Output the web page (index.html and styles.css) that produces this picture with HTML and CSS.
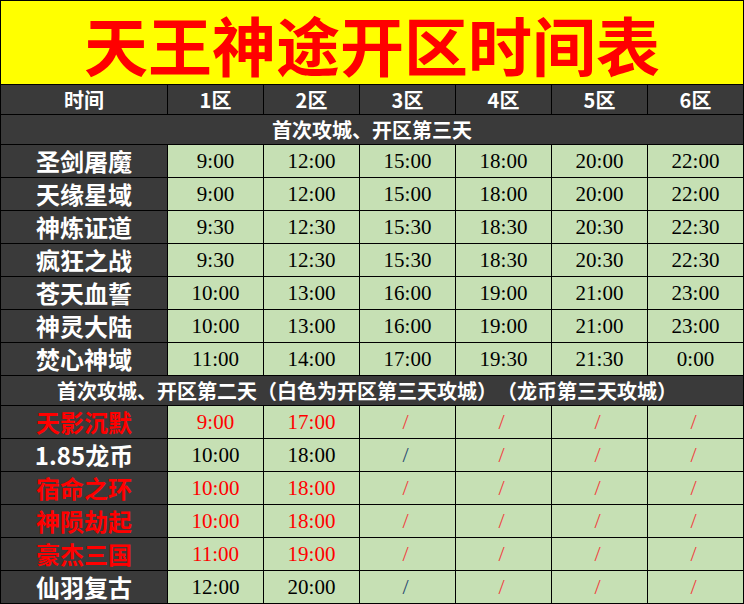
FILE: index.html
```html
<!DOCTYPE html>
<html lang="zh-CN">
<head>
<meta charset="utf-8">
<title>天王神途开区时间表</title>
<link rel="stylesheet" href="styles.css">
</head>
<body>
<div class="sheet">
  <div class="title">天王神途开区时间表</div>
  <div class="grid">
    <div class="hd">时间</div>
    <div class="hd">1区</div>
    <div class="hd">2区</div>
    <div class="hd">3区</div>
    <div class="hd">4区</div>
    <div class="hd">5区</div>
    <div class="hd">6区</div>

    <div class="sub">首次攻城、开区第三天</div>

    <div class="name">圣剑屠魔</div>
    <div class="t">9:00</div><div class="t">12:00</div><div class="t">15:00</div><div class="t">18:00</div><div class="t">20:00</div><div class="t">22:00</div>

    <div class="name">天缘星域</div>
    <div class="t">9:00</div><div class="t">12:00</div><div class="t">15:00</div><div class="t">18:00</div><div class="t">20:00</div><div class="t">22:00</div>

    <div class="name">神炼证道</div>
    <div class="t">9:30</div><div class="t">12:30</div><div class="t">15:30</div><div class="t">18:30</div><div class="t">20:30</div><div class="t">22:30</div>

    <div class="name">疯狂之战</div>
    <div class="t">9:30</div><div class="t">12:30</div><div class="t">15:30</div><div class="t">18:30</div><div class="t">20:30</div><div class="t">22:30</div>

    <div class="name">苍天血誓</div>
    <div class="t">10:00</div><div class="t">13:00</div><div class="t">16:00</div><div class="t">19:00</div><div class="t">21:00</div><div class="t">23:00</div>

    <div class="name">神灵大陆</div>
    <div class="t">10:00</div><div class="t">13:00</div><div class="t">16:00</div><div class="t">19:00</div><div class="t">21:00</div><div class="t">23:00</div>

    <div class="name">焚心神域</div>
    <div class="t">11:00</div><div class="t">14:00</div><div class="t">17:00</div><div class="t">19:30</div><div class="t">21:30</div><div class="t">0:00</div>

    <div class="sub sub2">首次攻城、开区第二天（白色为开区第三天攻城）（龙币第三天攻城）</div>

    <div class="name red">天影沉默</div>
    <div class="t red">9:00</div><div class="t red">17:00</div><div class="t sl red">/</div><div class="t sl red">/</div><div class="t sl red">/</div><div class="t sl red">/</div>

    <div class="name">1.85龙币</div>
    <div class="t">10:00</div><div class="t">18:00</div><div class="t sl dark">/</div><div class="t sl red">/</div><div class="t sl red">/</div><div class="t sl red">/</div>

    <div class="name red">宿命之环</div>
    <div class="t red">10:00</div><div class="t red">18:00</div><div class="t sl red">/</div><div class="t sl red">/</div><div class="t sl red">/</div><div class="t sl red">/</div>

    <div class="name red">神陨劫起</div>
    <div class="t red">10:00</div><div class="t red">18:00</div><div class="t sl red">/</div><div class="t sl red">/</div><div class="t sl red">/</div><div class="t sl red">/</div>

    <div class="name red">豪杰三国</div>
    <div class="t red">11:00</div><div class="t red">19:00</div><div class="t sl red">/</div><div class="t sl red">/</div><div class="t sl red">/</div><div class="t sl red">/</div>

    <div class="name">仙羽复古</div>
    <div class="t">12:00</div><div class="t">20:00</div><div class="t sl dark">/</div><div class="t sl red">/</div><div class="t sl red">/</div><div class="t sl red">/</div>
  </div>
</div>
</body>
</html>
```

FILE: styles.css
```css
html, body {
  margin: 0;
  padding: 0;
  background: #ffffff;
}

.sheet {
  width: 744px;
  height: 604px;
}

.title {
  height: 83px;
  border: 1px solid #000000;
  border-bottom: none;
  background: #ffff00;
  color: #ff0000;
  font-family: "Noto Sans CJK SC", sans-serif;
  font-weight: 700;
  font-size: 64px;
  line-height: 1;
  display: flex;
  align-items: center;
  justify-content: center;
}

.grid {
  display: grid;
  grid-template-columns: 166px repeat(6, 95px);
  grid-template-rows: 29px 29px repeat(7, 32px) 29px repeat(6, 32px);
  gap: 1px;
  padding: 1px;
  background: #000000;
}

.hd, .sub, .name, .t {
  line-height: 1;
  display: flex;
  align-items: center;
  justify-content: center;
  min-height: 0;
}

.hd, .sub, .name {
  background: #3a3a3a;
  color: #ffffff;
  font-family: "Noto Sans CJK SC", sans-serif;
  font-weight: 700;
}

.hd {
  font-size: 20px;
}

.sub {
  grid-column: 1 / -1;
  font-size: 20px;
  text-spacing-trim: space-all;
  font-feature-settings: "halt" 0, "chws" 0;
}

.sub2 {
  padding-right: 10px;
}

.name {
  font-size: 24px;
}

.t {
  background: #c6e0b4;
  color: #000000;
  font-family: "Liberation Serif", "Times New Roman", serif;
  font-size: 21px;
}

.sl {
  font-size: 22px;
  padding-right: 4px;
}

.red {
  color: #ff0000;
}

.sl.red {
  color: #f04040;
}

.dark {
  color: #2a4a70;
}
```
